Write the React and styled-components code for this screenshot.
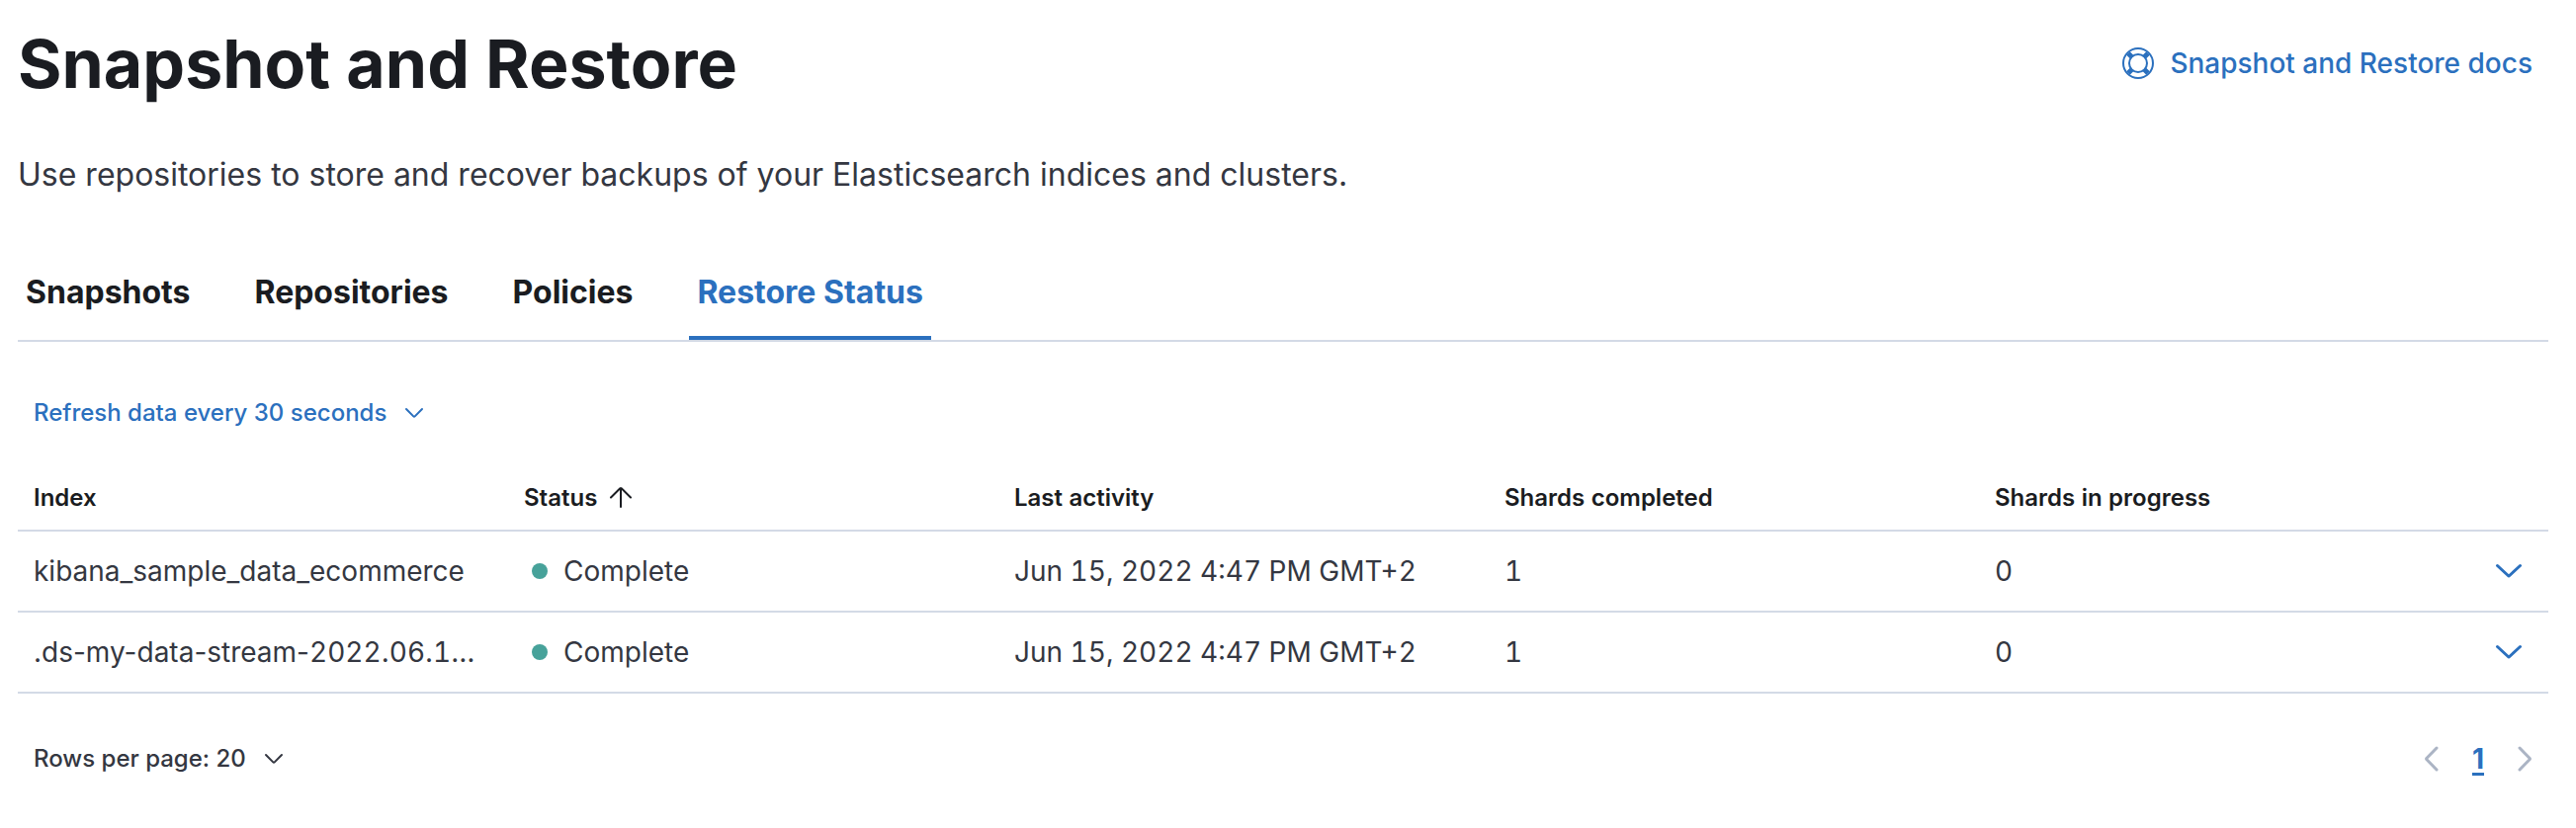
import React from "react";
import styled, { createGlobalStyle } from "styled-components";

const GlobalStyle = createGlobalStyle`
  *, *::before, *::after { box-sizing: border-box; }
  body {
    margin: 0;
    background: #fff;
    color: #343741;
    font-family: Inter, "Liberation Sans", sans-serif;
    font-size: 28px;
    line-height: 48px;
    -webkit-font-smoothing: antialiased;
  }
  button {
    margin: 0;
    padding: 0;
    border: 0;
    background: none;
    color: inherit;
    font: inherit;
    cursor: pointer;
  }
`;

const Page = styled.main`
  display: flex;
  flex-direction: column;
  padding: 24px 28px 46px 18px;
`;

const Header = styled.header`
  display: flex;
  align-items: center;
  justify-content: space-between;
`;

const Title = styled.h1`
  margin: 0;
  color: #1a1c21;
  font-size: 68px;
  font-weight: 700;
  line-height: 80px;
`;

const DocsLink = styled.a`
  display: flex;
  align-items: center;
  gap: 16px;
  padding: 0 16px;
  color: #2b70be;
  font-weight: 500;
  text-decoration: none;
`;

const Description = styled.p`
  margin: 49px 0 47px;
  font-size: 32px;
`;

const Tabs = styled.div`
  display: flex;
  gap: 49px;
  border-bottom: 2px solid #d3dae6;
`;

const Tab = styled.button`
  && {
    height: 96px;
    padding: 0 8px;
    box-shadow: ${(p) => (p.$active ? "inset 0 -4px 0 #2b70be" : "none")};
    color: ${(p) => (p.$active ? "#2b70be" : "#1a1c21")};
    font-size: 32px;
    font-weight: 700;
  }
`;

const Toolbar = styled.div`
  display: flex;
  padding: 48px 16px 28px;
`;

const MenuButton = styled.button`
  && {
    display: flex;
    align-items: center;
    gap: 16px;
    color: ${(p) => (p.$primary ? "#2b70be" : "#343741")};
    font-size: 24px;
    font-weight: 500;
  }
`;

const Table = styled.table`
  width: 100%;
  border-collapse: separate;
  border-spacing: 0;
  table-layout: fixed;
  font-feature-settings: "tnum" 1;
`;

const HeadCell = styled.th`
  width: ${(p) => (p.$narrow ? "80px" : "auto")};
  padding: 16px 16px 14px;
  border-bottom: 2px solid #d3dae6;
  color: #1a1c21;
  font-size: 24px;
  font-weight: 600;
  line-height: 36px;
  text-align: left;
`;

const SortButton = styled.button`
  && {
    display: flex;
    align-items: center;
    gap: 8px;
  }
`;

const Cell = styled.td`
  padding: 16px;
  border-bottom: 2px solid #d3dae6;
  white-space: nowrap;
`;

const IndexCell = styled(Cell)`
  overflow: hidden;
  text-overflow: ellipsis;
  font-feature-settings: normal;
`;

const Digits = styled.span`
  font-feature-settings: "tnum" 1;
`;

const Status = styled.span`
  display: flex;
  align-items: center;
  gap: 16px;
  padding-left: 8px;
`;

const Dot = styled.span`
  width: 16px;
  height: 16px;
  border-radius: 50%;
  background: #47a29a;
`;

const ExpandCell = styled(Cell)`
  padding: 16px 24px;
`;

const IconButton = styled.button`
  && {
    display: flex;
    align-items: center;
    justify-content: center;
    width: 32px;
    height: 48px;
    color: ${(p) => (p.$muted ? "#abb4c4" : "#2b70be")};
  }
`;

const Footer = styled.footer`
  display: flex;
  align-items: center;
  justify-content: space-between;
  padding: 42px 8px 0 16px;
`;

const Pagination = styled.nav`
  display: flex;
  align-items: center;
  gap: 25px;
`;

const PageLink = styled.a`
  color: #2b70be;
  font-weight: 700;
  text-decoration: underline;
  text-decoration-thickness: 3px;
  text-underline-offset: 4px;
`;

const Icon = styled.svg`
  display: block;
  flex: none;
  fill: none;
  stroke: currentColor;
  stroke-linecap: round;
  stroke-linejoin: round;
`;

function Lifebuoy() {
  return (
    <Icon width="32" height="32" viewBox="0 0 32 32" strokeWidth="2" aria-hidden="true">
      <circle cx="16" cy="16" r="15" />
      <circle cx="16" cy="16" r="9" />
      <path
        d="M6 6l3.500 3.500M26 6l-3.500 3.500M6 26l3.500-3.500M26 26l-3.500-3.500"
        strokeWidth="5"
        strokeLinecap="butt"
      />
    </Icon>
  );
}

function Chevron() {
  return (
    <Icon width="24" height="24" viewBox="0 0 24 24" strokeWidth="2" aria-hidden="true">
      <path d="M4 8l7.300 7.400a1 1 0 0 0 1.400 0L20 8" />
    </Icon>
  );
}

function RowChevron() {
  return (
    <Icon width="32" height="32" viewBox="0 0 32 32" strokeWidth="3" aria-hidden="true">
      <path d="M4.500 10.500l10.800 10a1 1 0 0 0 1.400 0L27.500 10.500" />
    </Icon>
  );
}

function PageArrow({ next }) {
  return (
    <Icon width="32" height="32" viewBox="0 0 32 32" strokeWidth="3" aria-hidden="true">
      <path d={next ? "M11 5l10 10.300a1 1 0 0 1 0 1.400L11 27" : "M21 5L11 15.300a1 1 0 0 0 0 1.400L21 27"} />
    </Icon>
  );
}

function SortArrow() {
  return (
    <Icon width="32" height="32" viewBox="0 0 32 32" strokeWidth="2" aria-hidden="true">
      <path d="M16 25V6M6 15.500l9.300-9.200a1 1 0 0 1 1.400 0L26 15.500" />
    </Icon>
  );
}

// Tabular figures for the digits only, so hyphens and dots keep their own widths.
function IndexName({ name }) {
  return name
    .split(/(\d+)/)
    .map((part, i) => (i % 2 ? <Digits key={i}>{part}</Digits> : part));
}

const tabs = ["Snapshots", "Repositories", "Policies", "Restore Status"];

const rows = [
  { index: "kibana_sample_data_ecommerce", status: "Complete", activity: "Jun 15, 2022 4:47 PM GMT+2", completed: 1, inProgress: 0 },
  { index: ".ds-my-data-stream-2022.06.1…", status: "Complete", activity: "Jun 15, 2022 4:47 PM GMT+2", completed: 1, inProgress: 0 },
];

export default function App() {
  return (
    <>
      <GlobalStyle />
      <Page>
        <Header>
          <Title>Snapshot and Restore</Title>
          <DocsLink href="#docs">
            <Lifebuoy />
            Snapshot and Restore docs
          </DocsLink>
        </Header>
        <Description>
          Use repositories to store and recover backups of your Elasticsearch indices and clusters.
        </Description>
        <Tabs role="tablist">
          {tabs.map((name) => {
            const active = name === "Restore Status";
            return (
              <Tab key={name} type="button" role="tab" aria-selected={active} $active={active}>
                {name}
              </Tab>
            );
          })}
        </Tabs>
        <Toolbar>
          <MenuButton type="button" aria-haspopup="true" $primary>
            Refresh data every 30 seconds
            <Chevron />
          </MenuButton>
        </Toolbar>
        <Table>
          <thead>
            <tr>
              <HeadCell scope="col">Index</HeadCell>
              <HeadCell scope="col" aria-sort="ascending">
                <SortButton type="button">
                  Status
                  <SortArrow />
                </SortButton>
              </HeadCell>
              <HeadCell scope="col">Last activity</HeadCell>
              <HeadCell scope="col">Shards completed</HeadCell>
              <HeadCell scope="col">Shards in progress</HeadCell>
              <HeadCell as="td" $narrow />
            </tr>
          </thead>
          <tbody>
            {rows.map((row) => (
              <tr key={row.index}>
                <IndexCell>
                  <IndexName name={row.index} />
                </IndexCell>
                <Cell>
                  <Status>
                    <Dot />
                    {row.status}
                  </Status>
                </Cell>
                <Cell>{row.activity}</Cell>
                <Cell>{row.completed}</Cell>
                <Cell>{row.inProgress}</Cell>
                <ExpandCell>
                  <IconButton type="button" aria-label="Expand row">
                    <RowChevron />
                  </IconButton>
                </ExpandCell>
              </tr>
            ))}
          </tbody>
        </Table>
        <Footer>
          <MenuButton type="button" aria-haspopup="true">
            Rows per page: 20
            <Chevron />
          </MenuButton>
          <Pagination aria-label="Pagination">
            <IconButton type="button" aria-label="Previous page" disabled $muted>
              <PageArrow />
            </IconButton>
            <PageLink href="#page-1" aria-current="page">1</PageLink>
            <IconButton type="button" aria-label="Next page" disabled $muted>
              <PageArrow next />
            </IconButton>
          </Pagination>
        </Footer>
      </Page>
    </>
  );
}
